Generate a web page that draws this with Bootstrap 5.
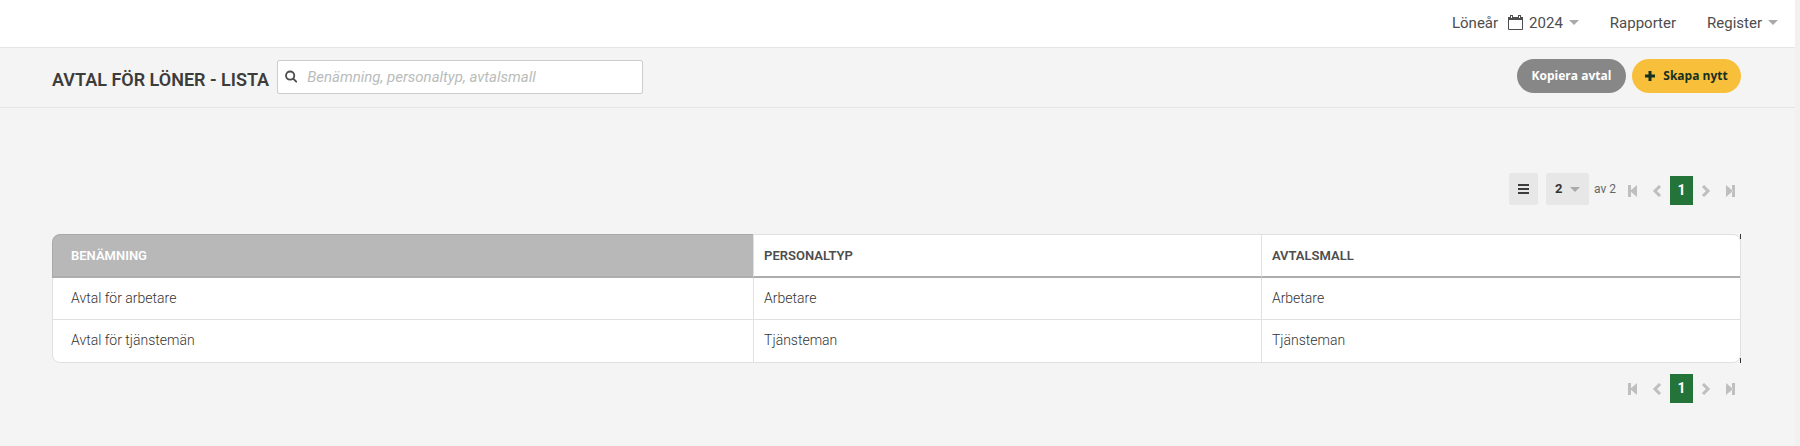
<!DOCTYPE html>
<html lang="sv">
<head>
<meta charset="utf-8">
<meta name="viewport" content="width=device-width, initial-scale=1">
<title>Avtal för löner - lista</title>
<link href="https://cdn.jsdelivr.net/npm/bootstrap@5.3.0/dist/css/bootstrap.min.css" rel="stylesheet">
<style>
  body { font-family: Roboto, "Liberation Sans", sans-serif; font-size: 14px; color: #4d4d4d; background: #f4f4f4; }
  .app-shell { min-height: 100vh; border-right: 5px solid #f1f1f0; }
  .top-nav { height: 48px; padding-right: 17px; background: #fff; border-bottom: 1px solid #e6e6e6; gap: 31px; }
  .top-nav a { color: #4d4d4d; font-size: 15px; line-height: 20px; gap: 6px; padding-bottom: 2px; }
  .caret-down { width: 10px; height: 5px; color: #aaa; }
  .page-bar { height: 60px; padding: 0 54px 2px 52px; border-bottom: 1px solid #e6e6e6; }
  .page-bar h1 { width: 215px; padding-top: 6px; font-size: 18px; line-height: 24px; font-weight: 600; color: #3c3c3b; }
  .search-box { width: 366px; height: 34px; margin-left: 10px; padding: 0 7px; gap: 10px; background: #fff; border: 1px solid #ccc; border-radius: 2px; }
  .search-box input { font-size: 15px; line-height: 20px; }
  .search-box input::placeholder { font-style: italic; color: #b9bcbb; opacity: 1; }
  .bar-actions { gap: 6px; padding-bottom: 2px; }
  .pill { width: 109px; height: 34px; padding: 0; border: 0; border-radius: 17px; font-family: "Open Sans", sans-serif; font-size: 12px; font-weight: 700; }
  .pill-gray, .pill-gray:hover { background: #878787; color: #fff; }
  .pill-yellow, .pill-yellow:hover { background: #f8bf3a; color: #16301f; }
  .page-content { padding: 65px 54px 24px 52px; }
  .list-tools { margin-bottom: 29px; }
  .menu-btn { width: 29px; height: 32px; margin-right: 8px; padding: 0; border: 0; border-radius: 2px; background: #e7e7e7; color: #3c3c3b; }
  .count-pick { width: 43px; height: 32px; margin-right: 5px; }
  .count-pick select { padding: 0 0 0 9px; appearance: none; border: 0; border-radius: 2px; background: #e7e7e7; color: #333; font-size: 13px; font-weight: 700; }
  .count-pick svg { right: 9px; top: 14px; pointer-events: none; }
  .total { width: 28px; font-size: 12px; line-height: 20px; color: #666; }
  .pages { gap: 2px; padding-top: 3px; }
  .pages button { width: 22px; height: 29px; padding: 0; border: 0; border-radius: 0; background: none; color: #bfbfbf; }
  .pages button.now { width: 23px; background: #24743a; color: #fff; font-size: 14px; font-weight: 700; }
  .grid-frame { border: 1px solid #e0e0e0; border-radius: 8px; background: #fff; }
  .grid-frame::before, .grid-frame::after { content: ""; position: absolute; right: -1px; width: 1px; height: 5px; background: #333; }
  .grid-frame::before { top: -1px; }
  .grid-frame::after { bottom: -1px; }
  .grid-frame table { table-layout: fixed; border-collapse: separate; border-spacing: 0; color: #4d4d4d; }
  .grid-frame th { height: 43px; padding: 0 10px; border-bottom: 2px solid #adadad; font-size: 13px; line-height: 18px; font-weight: 600; vertical-align: middle; text-transform: uppercase; }
  .grid-frame td { height: 42px; padding: 0 10px 2px; border-bottom: 1px solid #e0e0e0; line-height: 20px; vertical-align: middle; font-weight: 300; color: #333; }
  .grid-frame tr > * + * { border-left: 1px solid #e0e0e0; }
  .grid-frame tr > :first-child { padding-left: 18px; }
  .grid-frame tbody tr:last-child td { border-bottom: 0; }
  .grid-frame th.sorted { background: #b8b8b8; color: #fff; border-radius: 7px 0 0 0; box-shadow: 0 -1px #a9a9a9, -1px 0 #a9a9a9; }
  .col-name { width: 41.5%; }
  .col-type { width: 30.1%; }
</style>
</head>
<body>
<svg class="d-none" aria-hidden="true">
  <symbol id="down" viewBox="0 0 10 5"><path fill="currentColor" d="M0 0h10L5 5z"/></symbol>
  <symbol id="first" viewBox="0 0 10 12"><path fill="currentColor" d="M0 0h3v12H0zM9 0v12L2 6z"/></symbol>
  <symbol id="last" viewBox="0 0 10 12"><path fill="currentColor" d="M1 0v12l7-6zM7 0h3v12H7z"/></symbol>
  <symbol id="prev" viewBox="0 0 10 12"><path fill="none" stroke="currentColor" stroke-width="3" d="M8 1 3 6l5 5"/></symbol>
  <symbol id="next" viewBox="0 0 10 12"><path fill="none" stroke="currentColor" stroke-width="3" d="m2 1 5 5-5 5"/></symbol>
</svg>
<div class="app-shell">
  <nav class="top-nav d-flex align-items-center justify-content-end" aria-label="Huvudmeny">
    <a href="#" class="d-flex align-items-center text-decoration-none">
      <span class="me-1">Löneår</span>
      <svg width="15" height="15" viewBox="0 0 15 15" aria-hidden="true"><path fill="none" stroke="currentColor" d="M.5 2.5h14v12H.5z"/><path fill="currentColor" d="M0 2h15v3H0zM2 0h3v4H2zM10 0h3v4h-3z"/><path stroke="#fff" d="M3.500 1v2M11.500 1v2"/></svg>
      <span>2024</span>
      <svg class="caret-down" aria-hidden="true"><use href="#down"/></svg>
    </a>
    <a href="#" class="text-decoration-none">Rapporter</a>
    <a href="#" class="d-flex align-items-center text-decoration-none">Register <svg class="caret-down" aria-hidden="true"><use href="#down"/></svg></a>
  </nav>

  <header class="page-bar d-flex align-items-center">
    <h1 class="m-0 text-nowrap">AVTAL FÖR LÖNER - LISTA</h1>
    <label class="search-box d-flex align-items-center">
      <svg width="13" height="13" viewBox="0 0 13 13" fill="none" stroke="#4d4d4d" stroke-width="2" aria-hidden="true"><circle cx="5.500" cy="5.500" r="4.400"/><path stroke-linecap="round" d="m9 9 3 3"/></svg>
      <input type="search" class="form-control border-0 p-0 shadow-none" placeholder="Benämning, personaltyp, avtalsmall" aria-label="Sök avtal">
    </label>
    <div class="bar-actions d-flex ms-auto">
      <button type="button" class="btn pill pill-gray">Kopiera avtal</button>
      <button type="button" class="btn pill pill-yellow d-flex align-items-center justify-content-center gap-2">
        <svg width="10" height="10" viewBox="0 0 10 10" aria-hidden="true"><path stroke="currentColor" stroke-width="3" d="M5 0v10M0 5h10"/></svg>Skapa nytt
      </button>
    </div>
  </header>

  <main class="page-content">
    <div class="list-tools d-flex justify-content-end">
      <button type="button" class="btn menu-btn d-flex align-items-center justify-content-center" aria-label="Visa kolumner">
        <svg width="11" height="10" viewBox="0 0 11 10" aria-hidden="true"><path fill="currentColor" d="M0 0h11v2H0zM0 4h11v2H0zM0 8h11v2H0z"/></svg>
      </button>
      <div class="count-pick position-relative">
        <select class="w-100 h-100" aria-label="Antal rader"><option>2</option></select>
        <svg class="caret-down position-absolute" aria-hidden="true"><use href="#down"/></svg>
      </div>
      <span class="total align-self-center">av 2</span>
      <div class="pages d-flex">
        <button type="button" aria-label="Första sidan"><svg width="10" height="12"><use href="#first"/></svg></button>
        <button type="button" aria-label="Föregående sida"><svg width="10" height="12"><use href="#prev"/></svg></button>
        <button type="button" class="now" aria-current="page">1</button>
        <button type="button" aria-label="Nästa sida"><svg width="10" height="12"><use href="#next"/></svg></button>
        <button type="button" aria-label="Sista sidan"><svg width="10" height="12"><use href="#last"/></svg></button>
      </div>
    </div>

    <div class="grid-frame position-relative">
      <table class="w-100">
        <colgroup><col class="col-name"><col class="col-type"><col></colgroup>
        <thead><tr><th scope="col" class="sorted">Benämning</th><th scope="col">Personaltyp</th><th scope="col">Avtalsmall</th></tr></thead>
        <tbody>
          <tr><td>Avtal för arbetare</td><td>Arbetare</td><td>Arbetare</td></tr>
          <tr><td>Avtal för tjänstemän</td><td>Tjänsteman</td><td>Tjänsteman</td></tr>
        </tbody>
      </table>
    </div>

    <div class="pages d-flex justify-content-end mt-2">
      <button type="button" aria-label="Första sidan"><svg width="10" height="12"><use href="#first"/></svg></button>
      <button type="button" aria-label="Föregående sida"><svg width="10" height="12"><use href="#prev"/></svg></button>
      <button type="button" class="now" aria-current="page">1</button>
      <button type="button" aria-label="Nästa sida"><svg width="10" height="12"><use href="#next"/></svg></button>
      <button type="button" aria-label="Sista sidan"><svg width="10" height="12"><use href="#last"/></svg></button>
    </div>
  </main>
</div>
<script src="https://cdn.jsdelivr.net/npm/bootstrap@5.3.0/dist/js/bootstrap.bundle.min.js"></script>
</body>
</html>
